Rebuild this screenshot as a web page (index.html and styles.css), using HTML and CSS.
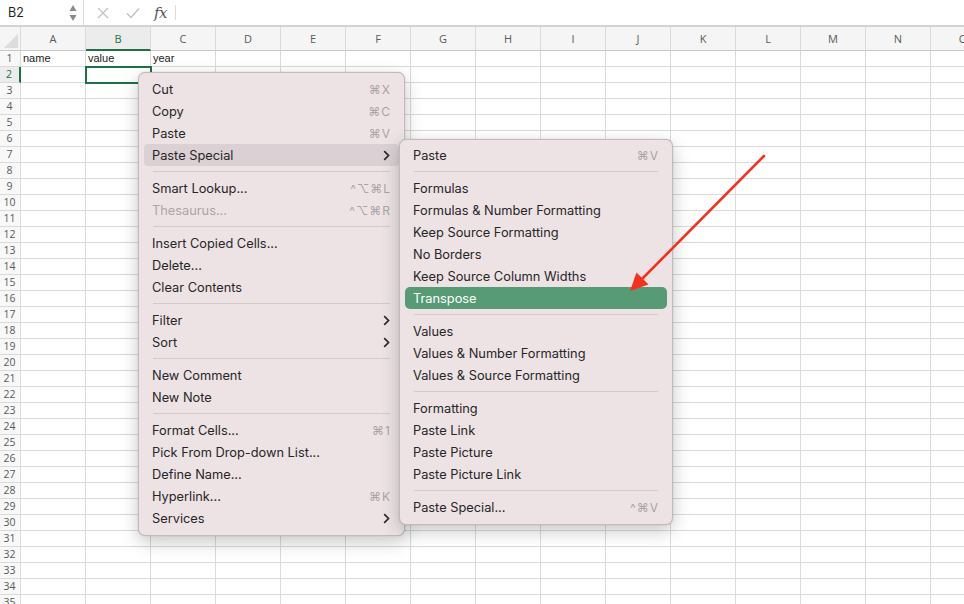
FILE: index.html
```html
<!DOCTYPE html>
<html>
<head>
<meta charset="utf-8">
<link rel="stylesheet" href="styles.css">
</head>
<body>
<div class="app">
  <div class="topbar">
    <div class="namebox">
      <span class="cellref">B2</span>
      <span class="stepper"><svg width="8" height="18" viewBox="0 0 8 18"><path d="M4 1 L7.5 7 H0.5 Z" fill="#8a8a8a"/><path d="M4 17 L7.5 11 H0.5 Z" fill="#8a8a8a"/></svg></span>
    </div>
    <div class="fbtns">
      <svg class="ficon" width="12" height="12" viewBox="0 0 12 12"><path d="M1 1 L11 11 M11 1 L1 11" stroke="#c4c4c4" stroke-width="1.4" fill="none"/></svg>
      <svg class="ficon" width="14" height="12" viewBox="0 0 14 12"><path d="M1 6.5 L5 10.5 L13 1.5" stroke="#c4c4c4" stroke-width="1.5" fill="none"/></svg>
      <span class="fx">fx</span>
      <span class="fsep"></span>
    </div>
  </div>
  <div class="sheet">
    <div class="row head"><span class="corner"></span><span>A</span><span class="sel">B</span><span>C</span><span>D</span><span>E</span><span>F</span><span>G</span><span>H</span><span>I</span><span>J</span><span>K</span><span>L</span><span>M</span><span>N</span><span>O</span></div>
    <div class="row"><span class="rh">1</span><span>name</span><span>value</span><span>year</span><span></span><span></span><span></span><span></span><span></span><span></span><span></span><span></span><span></span><span></span><span></span><span></span></div>
    <div class="row"><span class="rh rsel">2</span><span></span><span class="active"></span><span></span><span></span><span></span><span></span><span></span><span></span><span></span><span></span><span></span><span></span><span></span><span></span><span></span></div>
    <div class="row"><span class="rh">3</span><span></span><span></span><span></span><span></span><span></span><span></span><span></span><span></span><span></span><span></span><span></span><span></span><span></span><span></span><span></span></div>
    <div class="row"><span class="rh">4</span><span></span><span></span><span></span><span></span><span></span><span></span><span></span><span></span><span></span><span></span><span></span><span></span><span></span><span></span><span></span></div>
    <div class="row"><span class="rh">5</span><span></span><span></span><span></span><span></span><span></span><span></span><span></span><span></span><span></span><span></span><span></span><span></span><span></span><span></span><span></span></div>
    <div class="row"><span class="rh">6</span><span></span><span></span><span></span><span></span><span></span><span></span><span></span><span></span><span></span><span></span><span></span><span></span><span></span><span></span><span></span></div>
    <div class="row"><span class="rh">7</span><span></span><span></span><span></span><span></span><span></span><span></span><span></span><span></span><span></span><span></span><span></span><span></span><span></span><span></span><span></span></div>
    <div class="row"><span class="rh">8</span><span></span><span></span><span></span><span></span><span></span><span></span><span></span><span></span><span></span><span></span><span></span><span></span><span></span><span></span><span></span></div>
    <div class="row"><span class="rh">9</span><span></span><span></span><span></span><span></span><span></span><span></span><span></span><span></span><span></span><span></span><span></span><span></span><span></span><span></span><span></span></div>
    <div class="row"><span class="rh">10</span><span></span><span></span><span></span><span></span><span></span><span></span><span></span><span></span><span></span><span></span><span></span><span></span><span></span><span></span><span></span></div>
    <div class="row"><span class="rh">11</span><span></span><span></span><span></span><span></span><span></span><span></span><span></span><span></span><span></span><span></span><span></span><span></span><span></span><span></span><span></span></div>
    <div class="row"><span class="rh">12</span><span></span><span></span><span></span><span></span><span></span><span></span><span></span><span></span><span></span><span></span><span></span><span></span><span></span><span></span><span></span></div>
    <div class="row"><span class="rh">13</span><span></span><span></span><span></span><span></span><span></span><span></span><span></span><span></span><span></span><span></span><span></span><span></span><span></span><span></span><span></span></div>
    <div class="row"><span class="rh">14</span><span></span><span></span><span></span><span></span><span></span><span></span><span></span><span></span><span></span><span></span><span></span><span></span><span></span><span></span><span></span></div>
    <div class="row"><span class="rh">15</span><span></span><span></span><span></span><span></span><span></span><span></span><span></span><span></span><span></span><span></span><span></span><span></span><span></span><span></span><span></span></div>
    <div class="row"><span class="rh">16</span><span></span><span></span><span></span><span></span><span></span><span></span><span></span><span></span><span></span><span></span><span></span><span></span><span></span><span></span><span></span></div>
    <div class="row"><span class="rh">17</span><span></span><span></span><span></span><span></span><span></span><span></span><span></span><span></span><span></span><span></span><span></span><span></span><span></span><span></span><span></span></div>
    <div class="row"><span class="rh">18</span><span></span><span></span><span></span><span></span><span></span><span></span><span></span><span></span><span></span><span></span><span></span><span></span><span></span><span></span><span></span></div>
    <div class="row"><span class="rh">19</span><span></span><span></span><span></span><span></span><span></span><span></span><span></span><span></span><span></span><span></span><span></span><span></span><span></span><span></span><span></span></div>
    <div class="row"><span class="rh">20</span><span></span><span></span><span></span><span></span><span></span><span></span><span></span><span></span><span></span><span></span><span></span><span></span><span></span><span></span><span></span></div>
    <div class="row"><span class="rh">21</span><span></span><span></span><span></span><span></span><span></span><span></span><span></span><span></span><span></span><span></span><span></span><span></span><span></span><span></span><span></span></div>
    <div class="row"><span class="rh">22</span><span></span><span></span><span></span><span></span><span></span><span></span><span></span><span></span><span></span><span></span><span></span><span></span><span></span><span></span><span></span></div>
    <div class="row"><span class="rh">23</span><span></span><span></span><span></span><span></span><span></span><span></span><span></span><span></span><span></span><span></span><span></span><span></span><span></span><span></span><span></span></div>
    <div class="row"><span class="rh">24</span><span></span><span></span><span></span><span></span><span></span><span></span><span></span><span></span><span></span><span></span><span></span><span></span><span></span><span></span><span></span></div>
    <div class="row"><span class="rh">25</span><span></span><span></span><span></span><span></span><span></span><span></span><span></span><span></span><span></span><span></span><span></span><span></span><span></span><span></span><span></span></div>
    <div class="row"><span class="rh">26</span><span></span><span></span><span></span><span></span><span></span><span></span><span></span><span></span><span></span><span></span><span></span><span></span><span></span><span></span><span></span></div>
    <div class="row"><span class="rh">27</span><span></span><span></span><span></span><span></span><span></span><span></span><span></span><span></span><span></span><span></span><span></span><span></span><span></span><span></span><span></span></div>
    <div class="row"><span class="rh">28</span><span></span><span></span><span></span><span></span><span></span><span></span><span></span><span></span><span></span><span></span><span></span><span></span><span></span><span></span><span></span></div>
    <div class="row"><span class="rh">29</span><span></span><span></span><span></span><span></span><span></span><span></span><span></span><span></span><span></span><span></span><span></span><span></span><span></span><span></span><span></span></div>
    <div class="row"><span class="rh">30</span><span></span><span></span><span></span><span></span><span></span><span></span><span></span><span></span><span></span><span></span><span></span><span></span><span></span><span></span><span></span></div>
    <div class="row"><span class="rh">31</span><span></span><span></span><span></span><span></span><span></span><span></span><span></span><span></span><span></span><span></span><span></span><span></span><span></span><span></span><span></span></div>
    <div class="row"><span class="rh">32</span><span></span><span></span><span></span><span></span><span></span><span></span><span></span><span></span><span></span><span></span><span></span><span></span><span></span><span></span><span></span></div>
    <div class="row"><span class="rh">33</span><span></span><span></span><span></span><span></span><span></span><span></span><span></span><span></span><span></span><span></span><span></span><span></span><span></span><span></span><span></span></div>
    <div class="row"><span class="rh">34</span><span></span><span></span><span></span><span></span><span></span><span></span><span></span><span></span><span></span><span></span><span></span><span></span><span></span><span></span><span></span></div>
    <div class="row"><span class="rh">35</span><span></span><span></span><span></span><span></span><span></span><span></span><span></span><span></span><span></span><span></span><span></span><span></span><span></span><span></span><span></span></div>
  </div>

  <div class="menu ctx">
    <div class="item"><span>Cut</span><span class="key">⌘X</span></div>
    <div class="item"><span>Copy</span><span class="key">⌘C</span></div>
    <div class="item"><span>Paste</span><span class="key">⌘V</span></div>
    <div class="item hover"><span>Paste Special</span><svg class="chev" width="7" height="11" viewBox="0 0 7 11"><path d="M1.2 1.2 L5.5 5.5 L1.2 9.8" stroke="#2a2a2a" stroke-width="1.7" fill="none"/></svg></div>
    <div class="sep"></div>
    <div class="item"><span>Smart Lookup...</span><span class="key">^⌥⌘L</span></div>
    <div class="item disabled"><span>Thesaurus...</span><span class="key">^⌥⌘R</span></div>
    <div class="sep"></div>
    <div class="item"><span>Insert Copied Cells...</span></div>
    <div class="item"><span>Delete...</span></div>
    <div class="item"><span>Clear Contents</span></div>
    <div class="sep"></div>
    <div class="item"><span>Filter</span><svg class="chev" width="7" height="11" viewBox="0 0 7 11"><path d="M1.2 1.2 L5.5 5.5 L1.2 9.8" stroke="#2a2a2a" stroke-width="1.7" fill="none"/></svg></div>
    <div class="item"><span>Sort</span><svg class="chev" width="7" height="11" viewBox="0 0 7 11"><path d="M1.2 1.2 L5.5 5.5 L1.2 9.8" stroke="#2a2a2a" stroke-width="1.7" fill="none"/></svg></div>
    <div class="sep"></div>
    <div class="item"><span>New Comment</span></div>
    <div class="item"><span>New Note</span></div>
    <div class="sep"></div>
    <div class="item"><span>Format Cells...</span><span class="key">⌘1</span></div>
    <div class="item"><span>Pick From Drop-down List...</span></div>
    <div class="item"><span>Define Name...</span></div>
    <div class="item"><span>Hyperlink...</span><span class="key">⌘K</span></div>
    <div class="item"><span>Services</span><svg class="chev" width="7" height="11" viewBox="0 0 7 11"><path d="M1.2 1.2 L5.5 5.5 L1.2 9.8" stroke="#2a2a2a" stroke-width="1.7" fill="none"/></svg></div>
  </div>

  <div class="menu sub">
    <div class="item"><span>Paste</span><span class="key">⌘V</span></div>
    <div class="sep"></div>
    <div class="item"><span>Formulas</span></div>
    <div class="item"><span>Formulas &amp; Number Formatting</span></div>
    <div class="item"><span>Keep Source Formatting</span></div>
    <div class="item"><span>No Borders</span></div>
    <div class="item"><span>Keep Source Column Widths</span></div>
    <div class="item selected"><span>Transpose</span></div>
    <div class="sep"></div>
    <div class="item"><span>Values</span></div>
    <div class="item"><span>Values &amp; Number Formatting</span></div>
    <div class="item"><span>Values &amp; Source Formatting</span></div>
    <div class="sep"></div>
    <div class="item"><span>Formatting</span></div>
    <div class="item"><span>Paste Link</span></div>
    <div class="item"><span>Paste Picture</span></div>
    <div class="item"><span>Paste Picture Link</span></div>
    <div class="sep"></div>
    <div class="item"><span>Paste Special...</span><span class="key">^⌘V</span></div>
  </div>

  <svg class="arrow" width="964" height="604" viewBox="0 0 964 604">
    <line x1="764" y1="156" x2="641" y2="280" stroke="#f2321f" stroke-width="2.6" stroke-linecap="round"/>
    <polygon points="630,291 636.5,272.5 648.5,284.5" fill="#f2321f"/>
  </svg>
</div>
</body>
</html>
```
FILE: styles.css
```css
* { box-sizing: border-box; }
html, body { margin: 0; padding: 0; }
body {
  width: 964px;
  height: 604px;
  overflow: hidden;
  background: #ffffff;
  font-family: "Liberation Sans", Arial, sans-serif;
}
.app {
  position: relative;
  width: 964px;
  height: 604px;
  overflow: hidden;
}

/* top formula bar */
.topbar {
  height: 27px;
  display: flex;
  align-items: stretch;
  border-bottom: 2px solid #d3d3d3;
  background: #ffffff;
}
.namebox {
  width: 84px;
  display: flex;
  align-items: center;
  justify-content: space-between;
  padding: 0 6px 0 8px;
  border-right: 1px solid #dcdcdc;
}
.cellref {
  font-family: Inter, "Noto Sans", sans-serif;
  font-size: 12.5px;
  color: #1f1f1f;
}
.stepper { display: flex; align-items: center; }
.fbtns {
  display: flex;
  align-items: center;
  padding-left: 13px;
}
.ficon { margin-right: 17px; }
.fbtns .ficon:nth-child(2) { margin-right: 14px; }
.fx {
  font-family: "DejaVu Serif", "Liberation Serif", serif;
  font-style: italic;
  font-size: 15px;
  color: #555555;
  letter-spacing: -0.5px;
}
.fsep {
  width: 1px;
  height: 15px;
  background: #dcdcdc;
  margin-left: 8px;
}

/* sheet grid */
.sheet { width: 996px; }
.row {
  display: grid;
  grid-template-columns: 21px repeat(15, 65px);
  height: 16px;
}
.row > span {
  border-right: 1px solid #dadada;
  border-bottom: 1px solid #dadada;
  font-size: 11px;
  line-height: 15px;
  color: #1a1a1a;
  padding-left: 2px;
  white-space: nowrap;
  overflow: hidden;
}
.row.head { height: 24px; background: #f5f5f5; }
.row.head > span {
  text-align: center;
  padding-left: 0;
  line-height: 23px;
  color: #5a5a5a;
  font-family: "Open Sans", "Liberation Sans", sans-serif;
  font-size: 11px;
  border-bottom: 1px solid #c8c8c8;
}
.row.head > span.sel {
  color: #1e7145;
  border-bottom: 2px solid #1e7145;
  background: #ececec;
}
.corner { position: relative; }
.corner::after {
  content: "";
  position: absolute;
  right: 2px;
  bottom: 2px;
  width: 0;
  height: 0;
  border-left: 14px solid transparent;
  border-bottom: 14px solid #dcdcdc;
}
.row > span.rh {
  background: #f8f8f8;
  text-align: center;
  padding-left: 0;
  padding-right: 1px;
  color: #5a5a5a;
  font-family: "Open Sans", "Liberation Sans", sans-serif;
  font-size: 10.5px;
}
.row > span.rh.rsel {
  color: #1e7145;
  border-right: 2px solid #1e7145;
  background: #ececec;
}
.row > span.active {
  outline: 2px solid #1e7145;
  outline-offset: -1px;
  position: relative;
}

/* menus */
.menu {
  position: absolute;
  background: #ede3e5;
  border-radius: 7px;
  border: 0.5px solid rgba(0, 0, 0, 0.18);
  box-shadow: 0 6px 18px rgba(0, 0, 0, 0.22), 0 0 2px rgba(0, 0, 0, 0.12);
  font-family: Inter, "Noto Sans", sans-serif;
  font-size: 12.8px;
  color: #262626;
  display: flex;
  flex-direction: column;
}
.ctx {
  left: 138px;
  top: 72px;
  width: 267px;
  padding: 5px 0 6px;
}
.sub {
  left: 399px;
  top: 139px;
  width: 274px;
  padding: 4px 0 6px;
}
.item {
  height: 22px;
  margin: 0 5px;
  padding: 0 8px 0 8px;
  display: flex;
  align-items: center;
  justify-content: space-between;
  border-radius: 4px;
  white-space: nowrap;
}
.item.hover { background: #dbd1d4; }
.item.selected { background: #569b76; color: #ffffff; border-radius: 5px; }
.item.disabled { color: #aca4a6; }
.key {
  color: #aaa3a5;
  font-family: Inter, "DejaVu Sans", sans-serif;
  font-size: 12px;
  letter-spacing: 1px;
}
.chev { margin-right: 1px; }
.sep {
  height: 1px;
  margin: 5px 14px 5px;
  background: #d2c9cb;
}

.arrow {
  position: absolute;
  left: 0;
  top: 0;
  pointer-events: none;
}
```
